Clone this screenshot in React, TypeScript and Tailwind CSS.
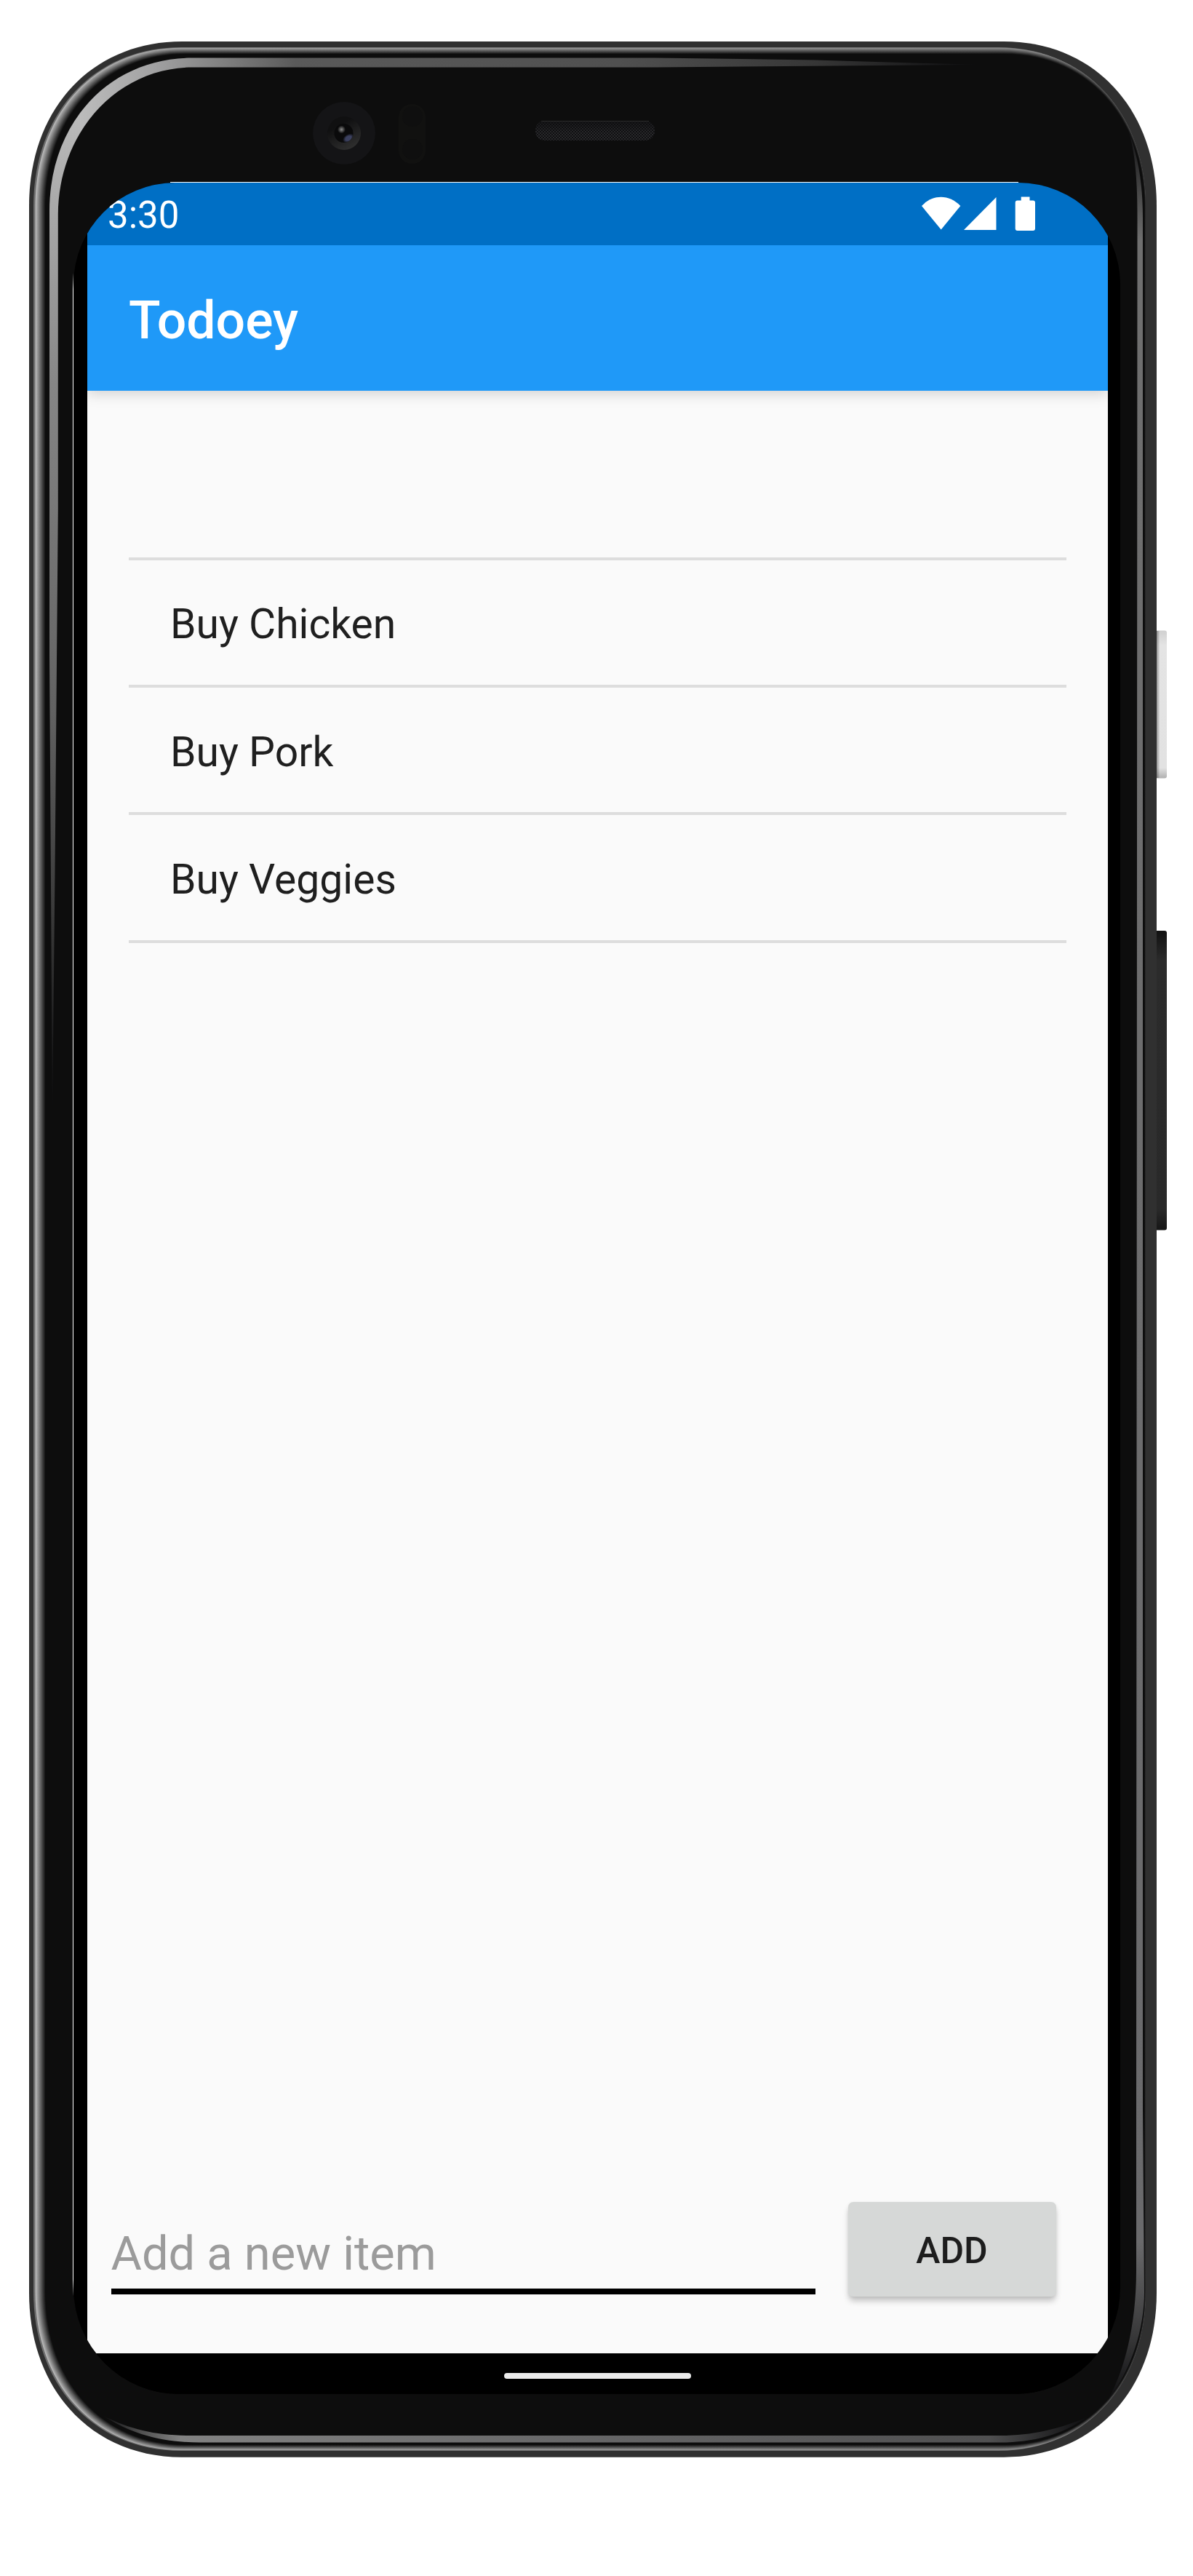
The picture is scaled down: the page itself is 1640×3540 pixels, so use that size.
import React from "react";

const items = ["Buy Chicken", "Buy Pork", "Buy Veggies"];

// Rounded rectangle with slightly squared-off elliptical corners.
function shell(x0: number, y0: number, x1: number, y1: number, a: number, b: number, k = 0.59) {
  const p = a * (1 - k);
  const q = b * (1 - k);
  return [
    `M${x0 + a} ${y0}H${x1 - a}`,
    `C${x1 - p} ${y0} ${x1} ${y0 + q} ${x1} ${y0 + b}`,
    `V${y1 - b}`,
    `C${x1} ${y1 - q} ${x1 - p} ${y1} ${x1 - a} ${y1}`,
    `H${x0 + a}`,
    `C${x0 + p} ${y1} ${x0} ${y1 - q} ${x0} ${y1 - b}`,
    `V${y0 + b}`,
    `C${x0} ${y0 + q} ${x0 + p} ${y0} ${x0 + a} ${y0}Z`,
  ].join("");
}

const STEPS = 14;
const bevel = Array.from({ length: STEPS }, (_, i) => i / (STEPS - 1));
const tone = (light: number, t: number) => {
  const v = Math.round(light + (13 - light) * t);
  return `rgb(${v},${v},${v})`;
};

const highlight =
  "M1345 89L1120 82.5L900 79.5H265C151 79 68 168 68 290V900L72 1530L75.5 1200L79.8 700V295C80 182 161 92.5 265 92.5H900Z";

function DeviceFrame() {
  return (
    <svg className="absolute left-0 top-0" width="1640" height="3540" viewBox="0 0 1640 3540" aria-hidden="true">
      <defs>
        {bevel.map((t, i) => (
          <linearGradient key={i} id={`bevel${i}`} x1="0" x2="1" y1="0" y2="0">
            <stop offset="0" stopColor={tone(186, t)} />
            <stop offset="0.12" stopColor={tone(168, t)} />
            <stop offset="0.9" stopColor={tone(140, t)} />
            <stop offset="1" stopColor={tone(60, t)} />
          </linearGradient>
        ))}
        <linearGradient id="topGlow" gradientUnits="userSpaceOnUse" x1="110" x2="1345" y1="0" y2="0">
          <stop offset="0" stopColor="#bcbcbc" />
          <stop offset="0.08" stopColor="#a2a2a3" />
          <stop offset="0.15" stopColor="#848484" />
          <stop offset="0.24" stopColor="#5a5a5a" />
          <stop offset="0.6" stopColor="#505050" />
          <stop offset="0.82" stopColor="#363636" />
          <stop offset="1" stopColor="#0d0d0f" />
        </linearGradient>
        <linearGradient id="leftGlow" gradientUnits="userSpaceOnUse" x1="0" x2="0" y1="140" y2="1530">
          <stop offset="0" stopColor="#bcbcbc" />
          <stop offset="0.12" stopColor="#a6a6a6" />
          <stop offset="0.28" stopColor="#868686" />
          <stop offset="0.6" stopColor="#626262" />
          <stop offset="0.83" stopColor="#343434" />
          <stop offset="1" stopColor="#0d0d0f" />
        </linearGradient>
        <linearGradient id="rightGlow" gradientUnits="userSpaceOnUse" x1="0" x2="0" y1="175" y2="3300">
          <stop offset="0" stopColor="#0d0d0f" />
          <stop offset="0.03" stopColor="#4a4a4a" />
          <stop offset="0.05" stopColor="#6f6f6f" />
          <stop offset="0.93" stopColor="#6a6a6c" />
          <stop offset="0.97" stopColor="#3a3a3b" />
          <stop offset="1" stopColor="#0d0d0f" />
        </linearGradient>
        <linearGradient id="bottomGlow" gradientUnits="userSpaceOnUse" x1="140" x2="1495" y1="0" y2="0">
          <stop offset="0" stopColor="#0d0d0f" />
          <stop offset="0.04" stopColor="#505050" />
          <stop offset="0.08" stopColor="#828282" />
          <stop offset="0.5" stopColor="#666667" />
          <stop offset="0.9" stopColor="#505051" />
          <stop offset="1" stopColor="#0d0d0f" />
        </linearGradient>
        <linearGradient id="power" x1="0" x2="0" y1="0" y2="1">
          <stop offset="0" stopColor="#d0d0d0" />
          <stop offset="0.1" stopColor="#e4e4e4" />
          <stop offset="0.93" stopColor="#e2e2e2" />
          <stop offset="1" stopColor="#b0b0b0" />
        </linearGradient>
        <linearGradient id="powerShade" x1="0" x2="1" y1="0" y2="0">
          <stop offset="0" stopColor="#000" stopOpacity="0.35" />
          <stop offset="0.5" stopColor="#000" stopOpacity="0" />
        </linearGradient>
        <linearGradient id="volume" x1="0" x2="0" y1="0" y2="1">
          <stop offset="0" stopColor="#111" />
          <stop offset="0.1" stopColor="#2b2b2b" />
          <stop offset="0.93" stopColor="#292929" />
          <stop offset="1" stopColor="#161616" />
        </linearGradient>
        <linearGradient id="lens" x1="0.2" x2="0.7" y1="0.1" y2="1">
          <stop offset="0.2" stopColor="#101011" />
          <stop offset="1" stopColor="#303030" />
        </linearGradient>
        <radialGradient id="glint">
          <stop offset="0.1" stopColor="#808080" />
          <stop offset="1" stopColor="#808080" stopOpacity="0" />
        </radialGradient>
        <radialGradient id="blueGlint">
          <stop offset="0.5" stopColor="#3c4160" />
          <stop offset="1" stopColor="#3c4160" stopOpacity="0" />
        </radialGradient>
        <pattern id="mesh" width="4" height="4" patternUnits="userSpaceOnUse">
          <rect width="4" height="4" fill="#0f0f11" />
          <rect width="2" height="2" fill="#29292b" />
          <rect x="2" y="2" width="2" height="2" fill="#29292b" />
        </pattern>
        <linearGradient id="speakerShade" x1="0" x2="0" y1="0" y2="1">
          <stop offset="0" stopColor="#0d0d0f" stopOpacity="0.7" />
          <stop offset="0.6" stopColor="#0d0d0f" stopOpacity="0" />
        </linearGradient>
        <linearGradient id="hairLeft" x1="0" x2="0" y1="0" y2="1">
          <stop offset="0" stopColor="#fff" stopOpacity="0" />
          <stop offset="0.008" stopColor="#fff" />
          <stop offset="0.992" stopColor="#fff" />
          <stop offset="1" stopColor="#fff" stopOpacity="0" />
        </linearGradient>
        <clipPath id="clipTop"><rect x="110" y="0" width="1530" height="400" /></clipPath>
        <clipPath id="clipLeft"><rect x="0" y="0" width="110" height="1600" /></clipPath>
        <clipPath id="clipLens"><circle cx="472.5" cy="183" r="13" /></clipPath>
      </defs>

      {/* side keys */}
      <path d="M1588 866.5h13a3 3 0 0 1 3 3v197a3 3 0 0 1-3 3h-13z" fill="url(#power)" />
      <rect x="1590" y="867" width="9" height="202" fill="url(#powerShade)" />
      <path d="M1588 1279h13a3 3 0 0 1 3 3v405.500a3 3 0 0 1-3 3h-13z" fill="url(#volume)" />

      {/* metal rim and bevel */}
      <path d={shell(40, 57, 1590, 3376.700, 210, 226)} fill="#303030" />
      <path d={shell(46, 65, 1575, 3368, 203, 219)} fill="#6e6e6e" />
      {bevel.map((t, i) => (
        <path
          key={i}
          d={shell(48.500 + 13.500 * t, 65.700 + 8.300 * t, 1575 - 1.500 * t, 3367 - 7 * t, 201 - 8 * t, 218 - 7 * t)}
          fill={`url(#bevel${i})`}
        />
      ))}

      {/* glass edge reflections */}
      <path d={highlight} fill="url(#topGlow)" clipPath="url(#clipTop)" />
      <path d={highlight} fill="url(#leftGlow)" clipPath="url(#clipLeft)" />
      <path
        d="M1549 172C1561 205 1571 240 1571 300V2900L1573 3150C1573 3200 1556 3256 1522 3300C1544 3262 1562 3200 1562 3120V2900L1563.500 300C1563.500 240 1560 205 1549 172Z"
        fill="url(#rightGlow)"
      />
      <path
        d="M142 3320C180 3339 215 3347 262 3347H1375C1420 3347 1455 3338 1494 3322C1460 3346 1420 3356.500 1375 3356.500H275C220 3356.500 180 3344 142 3320Z"
        fill="url(#bottomGlow)"
      />

      {/* front camera */}
      <circle cx="473" cy="183" r="43" fill="#141416" />
      <circle cx="473" cy="183" r="23" fill="url(#lens)" />
      <circle cx="472.500" cy="183" r="13" fill="#0a0a0b" />
      <g clipPath="url(#clipLens)">
        <circle cx="469.500" cy="178" r="5.500" fill="url(#glint)" />
        <ellipse cx="479" cy="190" rx="8.500" ry="5.500" fill="url(#blueGlint)" transform="rotate(-30 479 190)" />
      </g>

      {/* proximity sensors */}
      <rect x="548" y="143" width="37" height="82" rx="18" fill="#111110" />
      <circle cx="567" cy="160" r="14" fill="#0f0f0f" />
      <circle cx="567" cy="205" r="14" fill="#0f0f0f" />

      {/* earpiece */}
      <rect x="736" y="166" width="164" height="27" rx="13" fill="url(#mesh)" />
      <rect x="736" y="166" width="164" height="27" rx="13" fill="url(#speakerShade)" />
      <rect x="744" y="166" width="148" height="1" fill="#2a2a2b" />

      {/* display edge hairlines */}
      <rect x="100" y="375" width="1" height="2780" fill="url(#hairLeft)" />
      <rect x="234" y="250" width="1166" height="1" fill="#fff" />
    </svg>
  );
}

function StatusBar() {
  return (
    <div className="z-20 flex h-[85.5px] shrink-0 items-center justify-between bg-[#006fc5] pl-[28px] pr-[100px] text-white">
      <span className="pt-[4px] text-[51px] leading-none">3:30</span>
      <svg width="157" height="48" viewBox="1266 270 157 48" fill="currentColor" aria-hidden="true">
        <path d="M1267 283C1282 266.700 1305 266.700 1320.300 283L1293.700 315.500Z" />
        <path d="M1369.500 271V316H1325Z" />
        <path d="M1403.700 270.500h11.800v5h4.500a3 3 0 0 1 3 3v35.500a3 3 0 0 1-3 3h-21.300a3 3 0 0 1-3-3v-35.500a3 3 0 0 1 3-3h5z" />
      </svg>
    </div>
  );
}

export default function App() {
  return (
    <div className="relative h-[3540px] w-[1640px] overflow-hidden bg-white pl-[101px] pt-[251px] font-['Roboto',sans-serif]">
      <DeviceFrame />
      <div className="relative flex h-[3039px] w-[1439px] flex-col overflow-hidden rounded-t-[140px] rounded-b-[146px] bg-black pl-[19px] pr-[17px]">
        <StatusBar />
        <header className="z-10 flex h-[200px] shrink-0 items-center bg-[#1f99f8] pl-[57px] pt-[8px] shadow-[0_4px_18px_rgba(0,0,0,0.17)]">
          <h1 className="text-[71.5px] font-medium leading-none text-white">Todoey</h1>
        </header>
        <main className="flex min-h-0 flex-1 flex-col justify-between bg-[#fafafa]">
          <ul className="ml-[57px] mr-[57px] mt-[229px] border-t-[4px] border-[#dddddd]">
            {items.map((item) => (
              <li key={item} className="flex h-[175.4px] items-center border-b-[4px] border-[#dddddd] pl-[57px] pt-[5px]">
                <span className="text-[57px] leading-none text-[#1f1f1f]">{item}</span>
              </li>
            ))}
          </ul>
          <div className="flex items-end pb-[78px] pl-[32.500px] pr-[71.500px]">
            <div className="mb-[3.5px] flex h-[120px] w-[968.500px] items-end border-b-[8px] border-black pb-[15px]">
              <span className="text-[65px] leading-none text-[#9b9b9b]">Add a new item</span>
            </div>
            <button className="ml-auto flex h-[130px] w-[286px] items-center justify-center rounded-[7px] bg-[#d6d8d7] pt-[3px] shadow-[0_7px_9px_-1px_rgba(0,0,0,0.22),0_1px_4px_rgba(0,0,0,0.07)]">
              <span className="text-[50px] font-medium leading-none text-[#1d1d1d]">ADD</span>
            </button>
          </div>
        </main>
        <div className="flex h-[56px] shrink-0 justify-center bg-black pt-[27px]">
          <div className="h-[8px] w-[257px] rounded-full bg-[#ececec]" />
        </div>
      </div>
    </div>
  );
}
